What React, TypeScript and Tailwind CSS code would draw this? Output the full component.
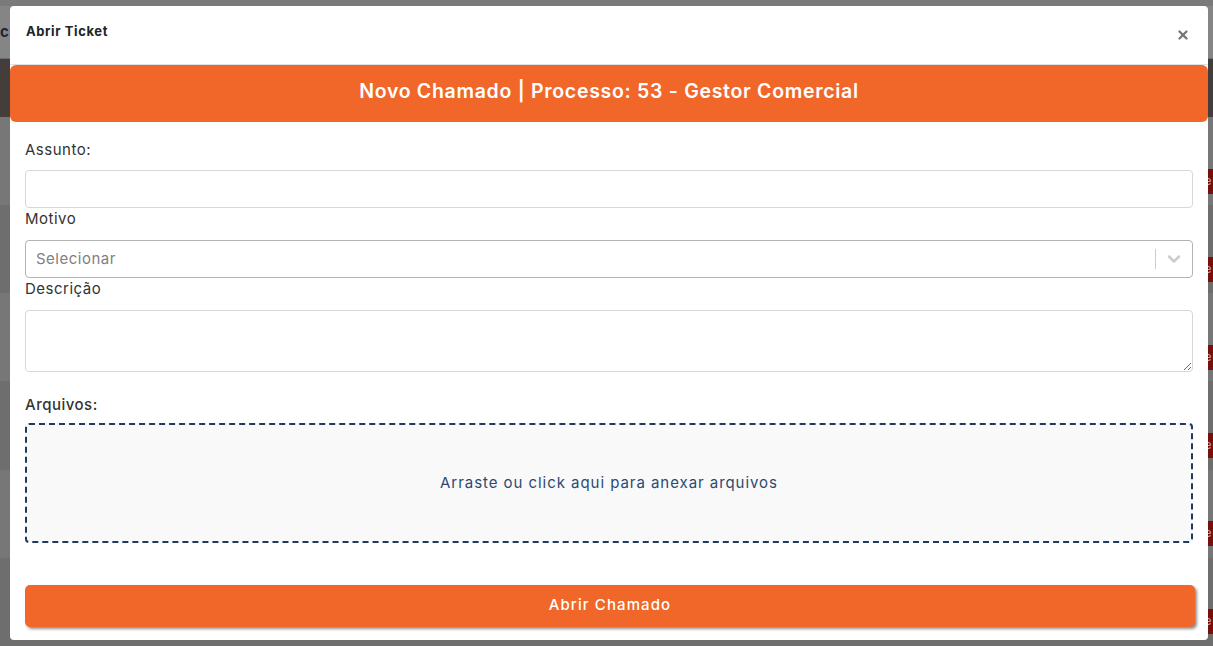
import { X, ChevronDown } from 'lucide-react';

const rows = [0, 1, 2, 3, 4, 5];

function Backdrop() {
  return (
    <div className="absolute inset-0 flex flex-col bg-[#7f7f7f]">
      <div className="h-[6px] bg-[#7a7a7a]" />
      <div className="h-[56px] bg-[#858585] border-b border-[#6e6e6e] flex items-center">
        <span className="text-[15px] font-bold text-[#1f2535]">c</span>
      </div>
      <div className="h-[60px] bg-[#433e3c]" />
      {rows.map((r) => (
        <div
          key={r}
          className={`h-[92px] flex items-center justify-end ${r % 2 === 0 ? 'bg-[#777777]' : 'bg-[#6e6e6e]'}`}
        >
          <span className="h-[25px] w-[10px] bg-[#7c0d0d] text-[11px] text-[#bdbdbd] leading-[25px] pl-[2px] mt-[40px]">e</span>
        </div>
      ))}
    </div>
  );
}

export default function App() {
  return (
    <div className="relative w-[1213px] h-[646px] overflow-hidden font-['Inter',sans-serif]">
      <Backdrop />
      <div className="absolute inset-0 pt-[6px] pl-[10px]">
        <div className="w-[1198px] h-[634px] bg-white rounded-[4px] flex flex-col">
          {/* Header */}
          <div className="h-[59px] border-b border-[#dee2e6] flex items-start justify-between pl-[16px] pr-[18px]">
            <h5 className="mt-[16px] text-[13px] font-bold text-[#212529] tracking-[0.6px]">Abrir Ticket</h5>
            <X className="mt-[22px] w-[14px] h-[14px] text-[#777777]" strokeWidth={4} />
          </div>

          {/* Banner */}
          <div className="h-[57px] pb-[4px] bg-[#f1672a] rounded-[6px] flex items-center justify-center">
            <h3 className="text-[19.5px] font-semibold text-white tracking-[0.7px]">
              Novo Chamado | Processo: 53 - Gestor Comercial
            </h3>
          </div>

          {/* Form */}
          <div className="flex flex-col px-[15px] text-[15px] text-[#333333] tracking-[0.5px]">
            <label className="mt-[17px] h-[22px] leading-[22px]">Assunto:</label>
            <input
              type="text"
              className="mt-[9px] h-[38px] w-full border border-[#d4d7dc] rounded-[4px] px-[10px] outline-none"
            />
            <label className="h-[22px] leading-[22px]">Motivo</label>
            <div className="mt-[10px] h-[38px] w-full border border-[#b3b3b3] rounded-[4px] flex items-center">
              <span className="flex-1 pl-[10px] text-[#808080]">Selecionar</span>
              <span className="w-px h-[20px] bg-[#cccccc]" />
              <ChevronDown className="w-[20px] h-[20px] mx-[8px] text-[#cccccc]" strokeWidth={3} />
            </div>
            <label className="h-[22px] leading-[22px]">Descrição</label>
            <textarea className="mt-[10px] h-[62px] w-full border border-[#d4d7dc] rounded-[4px] px-[10px] py-[6px] outline-none" />
            <label className="mt-[22px] h-[22px] leading-[22px] font-medium">Arquivos:</label>
            <div className="mt-[7px] h-[120px] w-full border-2 border-dashed border-[#1e3a5f] rounded-[4px] bg-[#f9f9f9] flex items-center justify-center">
              <span className="text-[#2b4a72] tracking-[0.95px]">Arraste ou click aqui para anexar arquivos</span>
            </div>
            <button className="mt-[42px] h-[42px] pb-[2px] w-[1170px] bg-[#f1672a] rounded-[5px] text-white font-medium tracking-[1.1px] shadow-[2px_2px_3px_rgba(0,0,0,0.45)]">
              Abrir Chamado
            </button>
          </div>
        </div>
      </div>
    </div>
  );
}
